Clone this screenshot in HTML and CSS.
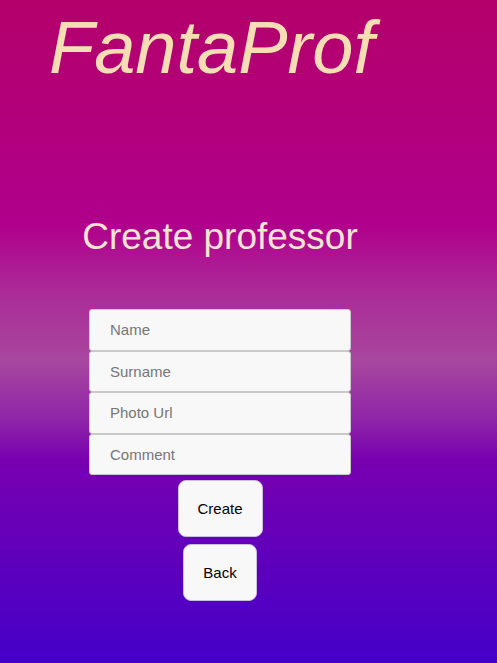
FILE: index.html
```html
<!DOCTYPE html>
<html lang="en">
<head>
<meta charset="utf-8">
<title>FantaProf</title>
<link rel="stylesheet" href="styles.css">
</head>
<body>
<header class="top">
  <h1 class="brand">FantaProf</h1>
</header>
<main class="panel">
  <h2 class="heading">Create professor</h2>
  <form class="form">
    <div class="fields">
      <input class="field" type="text" placeholder="Name">
      <input class="field" type="text" placeholder="Surname">
      <input class="field" type="text" placeholder="Photo Url">
      <input class="field" type="text" placeholder="Comment">
    </div>
    <button class="btn btn-create" type="button">Create</button>
    <button class="btn btn-back" type="button">Back</button>
  </form>
</main>
</body>
</html>
```
FILE: styles.css
```css
html, body {
  margin: 0;
  padding: 0;
  height: 100%;
}
body {
  min-height: 663px;
  font-family: "Liberation Sans", Arial, sans-serif;
  background: linear-gradient(180deg,
    #b4006a 0px,
    #b0008c 225px,
    #ab2a98 290px,
    #a8479e 360px,
    #8e25a8 420px,
    #7800b0 460px,
    #4400c8 663px);
}
.top {
  padding: 6px 0 0 49px;
}
.brand {
  margin: 0;
  font-size: 74px;
  font-style: italic;
  font-weight: normal;
  line-height: 83px;
  color: #f5deb3;
}
.panel {
  width: 440px;
  text-align: center;
  padding-top: 127px;
}
.heading {
  margin: 0;
  font-size: 37px;
  font-weight: normal;
  line-height: 41px;
  color: #f1e4d2;
}
.form {
  margin-top: 52px;
  display: flex;
  flex-direction: column;
  align-items: center;
}
.fields {
  display: flex;
  flex-direction: column;
  width: 262px;
}
.field {
  box-sizing: border-box;
  width: 262px;
  height: 41.5px;
  margin: 0;
  padding: 0 20px;
  border: 1px solid #c9c9c9;
  border-radius: 3px;
  background: #f8f8f8;
  font-family: "Liberation Sans", Arial, sans-serif;
  font-size: 15px;
  color: #333;
  outline: none;
}
.field::placeholder {
  color: #767676;
}
.btn {
  box-sizing: border-box;
  height: 57px;
  padding: 0 18px 1px;
  border: 1px solid #c9bfe0;
  border-radius: 8px;
  background: #f8f8f8;
  font-family: "Liberation Sans", Arial, sans-serif;
  font-size: 15px;
  color: #000;
}
.btn-create {
  margin-top: 5px;
  width: 85px;
}
.btn-back {
  margin-top: 7px;
  width: 74px;
}
```
